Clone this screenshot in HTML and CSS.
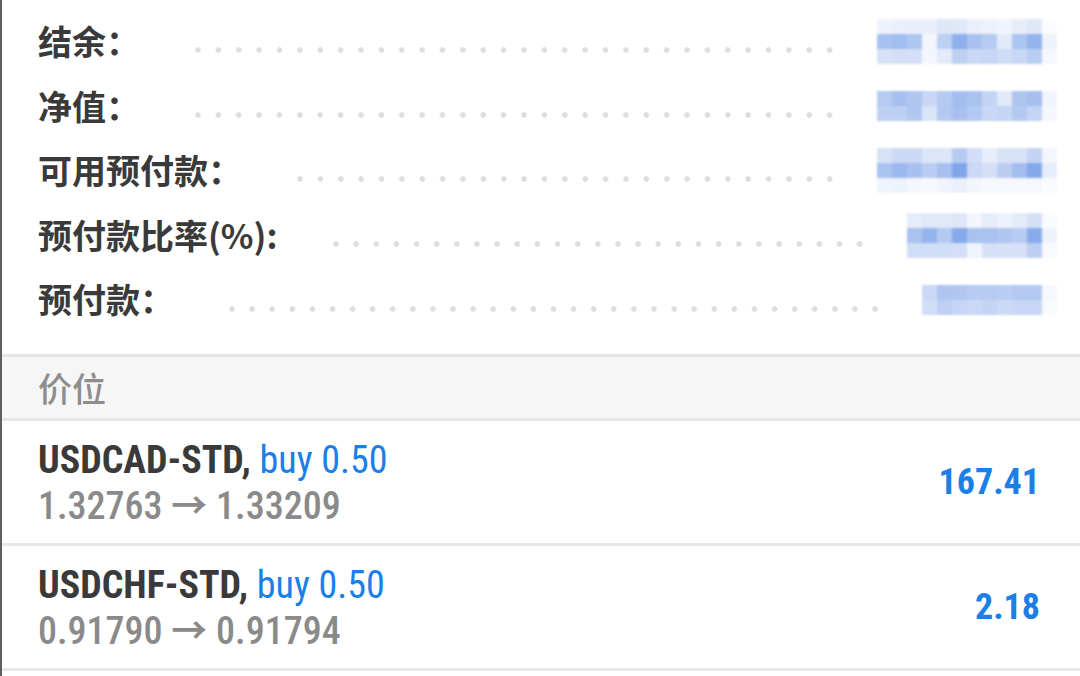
FILE: index.html
```html
<!DOCTYPE html>
<html lang="zh-CN">
<head>
  <meta charset="UTF-8">
  <title>交易 - 账户</title>
  <link rel="stylesheet" href="styles.css">
</head>
<body>
  <div class="screen">

    <!-- 账户摘要 -->
    <section class="summary">
      <div class="row">
        <span class="label">结余：</span>
        <span class="dots"></span>
        <div class="mosaic" data-key="balance"></div>
      </div>
      <div class="row">
        <span class="label">净值：</span>
        <span class="dots"></span>
        <div class="mosaic" data-key="equity"></div>
      </div>
      <div class="row">
        <span class="label">可用预付款：</span>
        <span class="dots"></span>
        <div class="mosaic" data-key="free"></div>
      </div>
      <div class="row">
        <span class="label">预付款比率(%):</span>
        <span class="dots"></span>
        <div class="mosaic" data-key="level"></div>
      </div>
      <div class="row">
        <span class="label">预付款：</span>
        <span class="dots"></span>
        <div class="mosaic" data-key="margin"></div>
      </div>
    </section>

    <!-- 持仓 -->
    <div class="section-head">价位</div>

    <div class="position">
      <div class="position-info">
        <div class="line1"><span class="symbol">USDCAD-STD,</span> <span class="side">buy 0.50</span></div>
        <div class="line2">1.32763 <span class="arrow">→</span> 1.33209</div>
      </div>
      <div class="profit">167.41</div>
    </div>

    <div class="position">
      <div class="position-info">
        <div class="line1"><span class="symbol">USDCHF-STD,</span> <span class="side">buy 0.50</span></div>
        <div class="line2">0.91790 <span class="arrow">→</span> 0.91794</div>
      </div>
      <div class="profit">2.18</div>
    </div>
  </div>

  <script>
    // 打码的数值 (每格 15px)
    const mosaics = {
      balance: [
        ["#eef3fb","#eaf0fb","#e9effa","#e9effa","#dde7f8","#dfe8f8","#eaf0fb","#ecf1fb","#f0f4fc","#e7eefa","#dfe8f8","#fbfcfe"],
        ["#a7c2f0","#a2bdef","#aec6f0","#f3f6fc","#bcd0f2","#8eb0ec","#a9c1f0","#b6cbf1","#e2eaf9","#abc4f0","#95b4ed","#eef2fb"],
        ["#d6e2f7","#d3dff7","#d4e0f7","#f3f6fc","#e3ebf9","#bed1f3","#c9d8f5","#c6d6f4","#cfdcf6","#c8d7f5","#b9cdf3","#f6f8fd"]
      ],
      equity: [
        ["#b5cbf1","#a6c0ef","#afc6f0","#c6d6f4","#b5caf1","#a3bdef","#aac2f0","#c2d3f4","#e1e9f9","#aec5f0","#a6bfef","#f0f4fc"],
        ["#bfd1f3","#bcd0f3","#b0c7f1","#dae4f8","#b3c9f1","#a7c0ef","#b3c9f1","#c8d7f5","#c5d5f4","#b4c9f1","#c4d4f4","#f4f7fd"]
      ],
      free: [
        ["#d7e2f7","#cbd9f5","#cbd9f5","#dce6f8","#dce6f8","#b6cbf1","#d2def6","#e7eefa","#d8e3f7","#d8e3f7","#c4d4f4","#f3f6fc"],
        ["#a9c2f0","#9db8ee","#a7c0ef","#b9cdf2","#a7c0ef","#80a6ea","#c9d8f5","#d5e0f7","#bbcef2","#a3bdef","#84a9eb","#e6edfa"],
        ["#f0f4fc","#eef3fb","#f4f7fd","#f6f8fd","#f0f4fc","#eaf0fb","#f3f6fc","#f6f8fd","#f6f8fd","#f6f8fd","#f6f8fd","#fafbfe"]
      ],
      level: [
        ["#e6edfa","#e1e9f9","#e1e9f9","#dde7f8","#f3f6fc","#e6edfa","#ecf1fb","#e3ebf9","#d5e0f7","#fafbfe"],
        ["#a9c2f0","#95b4ed","#b3c9f1","#86aaeb","#a9c2f0","#a9c2f0","#afc6f0","#b8ccf2","#88abeb","#eef2fb"],
        ["#d0ddf6","#d0ddf6","#d0ddf6","#d3dff7","#f0f4fc","#d6e1f7","#d6e1f7","#d6e1f7","#bccff2","#f8fafd"]
      ],
      margin: [
        ["#c9d8f5","#aec5f0","#b1c7f1","#b7cbf2","#b7cbf2","#b9cdf2","#b3c9f1","#b3c9f1","#f6f8fd"],
        ["#d0ddf6","#bdd0f3","#c6d6f4","#c9d8f5","#c3d4f4","#cbd9f5","#c6d6f4","#c6d6f4","#f8fafd"]
      ]
    };

    document.querySelectorAll(".mosaic").forEach(el => {
      const filas = mosaics[el.dataset.key];
      el.style.gridTemplateColumns = "repeat(" + filas[0].length + ", 15px)";
      filas.forEach(fila => {
        fila.forEach(color => {
          const celda = document.createElement("span");
          celda.style.background = color;
          el.appendChild(celda);
        });
      });
    });
  </script>
</body>
</html>
```

FILE: styles.css
```css
* {
  box-sizing: border-box;
}

body {
  margin: 0;
  background-color: #ffffff;
  font-family: "Noto Sans CJK SC", sans-serif;
  overflow: hidden;
}

.screen {
  height: 676px;
  border-left: 2px solid #5f5f5f;
}

/* resumen */
.summary {
  padding: 9px 23px 22px 36px;
}

.row {
  display: flex;
  align-items: center;
  height: 64.6px;
}

.label {
  font-size: 34px;
  font-weight: 700;
  color: #3a3a3a;
  line-height: 64.6px;
  white-space: nowrap;
}

.dots {
  flex: 1;
  height: 6px;
  margin: 18px 37px 0 48px;
  background-image: radial-gradient(circle, #dedede 2.4px, rgba(222,222,222,0) 3.2px);
  background-size: 20px 6px;
  background-repeat: space no-repeat;
}

.mosaic {
  display: grid;
  grid-auto-rows: 15px;
  filter: blur(0.8px);
}

/* cabecera */
.section-head {
  height: 67px;
  display: flex;
  align-items: center;
  padding-left: 36px;
  border-top: 3px solid #e6e6e6;
  border-bottom: 3px solid #e6e6e6;
  background-color: #f6f6f6;
  font-size: 34px;
  font-weight: 500;
  color: #8d8d8d;
}

/* posiciones */
.position {
  height: 125px;
  display: flex;
  align-items: center;
  justify-content: space-between;
  padding: 0 40px 0 36px;
  border-bottom: 3px solid #e8e8e8;
  font-family: "Roboto Condensed", Roboto, sans-serif;
  font-stretch: condensed;
  font-size: 38px;
  line-height: 43px;
}

.position-info {
  margin-top: 4px;
}

.symbol {
  font-weight: 700;
  color: #3a3a3a;
}

.side {
  color: #1a7fe6;
}

.line2 {
  color: #8a8a8a;
  font-weight: 500;
}

.arrow {
  font-family: "Noto Sans CJK SC", sans-serif;
  font-weight: 700;
  font-size: 36px;
}

.profit {
  margin-top: 2px;
  font-size: 36px;
  font-weight: 700;
  color: #1a7fe6;
}
```
